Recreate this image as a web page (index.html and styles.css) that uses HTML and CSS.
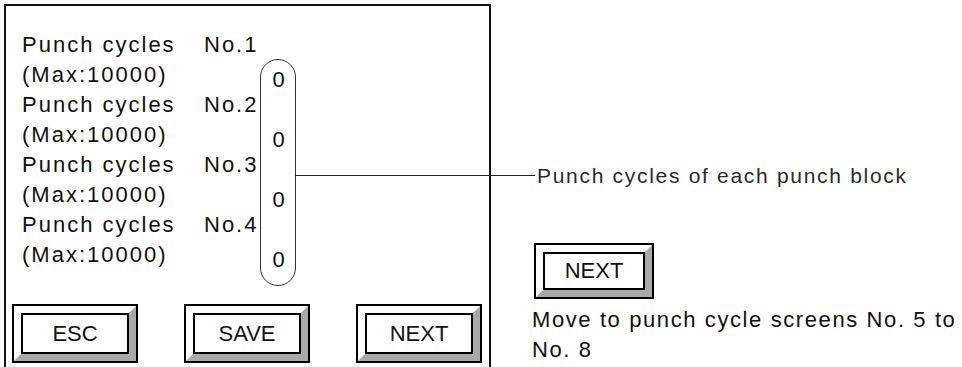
FILE: index.html
```html
<!DOCTYPE html>
<html lang="en">
<head>
   <meta charset="UTF-8">
   <meta name="viewport" content="width=device-width, initial-scale=1.0">
   <title>Punch Cycles</title>
   <link rel="stylesheet" href="styles.css">
</head>
<body>
    <div class="page">
        <!-- Screen panel -->
        <div class="panel">
            <div class="rows">
                <div class="labels">
                    <div><span class="name">Punch cycles</span>No.1</div>
                    <div>(Max:10000)</div>
                    <div><span class="name">Punch cycles</span>No.2</div>
                    <div>(Max:10000)</div>
                    <div><span class="name">Punch cycles</span>No.3</div>
                    <div>(Max:10000)</div>
                    <div><span class="name">Punch cycles</span>No.4</div>
                    <div>(Max:10000)</div>
                </div>
                <div class="oval">
                    <div>0</div>
                    <div>0</div>
                    <div>0</div>
                    <div>0</div>
                </div>
            </div>

            <div class="buttons">
                <div class="btn"><div class="bevel"><div class="face">ESC</div></div></div>
                <div class="btn"><div class="bevel"><div class="face">SAVE</div></div></div>
                <div class="btn"><div class="bevel"><div class="face">NEXT</div></div></div>
            </div>
        </div>

        <!-- Notes -->
        <div class="notes">
            <p class="callout">Punch cycles of each punch block</p>
            <div class="btn btn-small"><div class="bevel"><div class="face">NEXT</div></div></div>
            <p class="desc">Move to punch cycle screens No. 5 to<br>No. 8</p>
        </div>
    </div>
</body>
</html>
```

FILE: styles.css
```css
html, body {
    margin: 0;
    height: 100%;
    overflow: hidden;
    background-color: #fff;
}
body {
    font-family: "Liberation Sans", Arial, sans-serif;
    font-size: 22px;
    color: #111;
}
.page {
    display: flex;
    align-items: flex-start;
}
.panel {
    box-sizing: border-box;
    width: 487px;
    height: 363px;
    margin: 4px 0 0 4px;
    border: 2px solid #111;
    border-bottom: none;
    padding-top: 24px;
}
.rows {
    display: flex;
    align-items: flex-start;
}
.labels {
    width: 238px;
    padding-left: 16px;
    line-height: 30px;
    letter-spacing: 2px;
    white-space: nowrap;
}
.name {
    display: inline-block;
    width: 182px;
}
.oval {
    position: relative;
    box-sizing: border-box;
    width: 36px;
    height: 227px;
    margin-top: 29px;
    padding: 5px 0 0 1px;
    border: 1px solid #333;
    border-radius: 18px;
    display: flex;
    flex-direction: column;
    gap: 30px;
    line-height: 30px;
    text-align: center;
}
/* leader line to the callout */
.oval::after {
    content: "";
    position: absolute;
    left: 100%;
    top: 115px;
    width: 240px;
    height: 1px;
    background-color: #222;
}
.buttons {
    display: flex;
    justify-content: space-between;
    margin-top: 18px;
    padding: 0 7px 0 6px;
}
.btn {
    box-sizing: border-box;
    width: 126px;
    height: 59px;
    border: 2px solid #000;
    display: flex;
}
.bevel {
    flex: 1;
    display: flex;
    border-style: solid;
    border-width: 7px;
    border-color: #fff #a9a9a9 #a9a9a9 #fff;
}
.face {
    flex: 1;
    display: flex;
    align-items: center;
    justify-content: center;
    border: 2px solid #000;
    background-color: #fff;
}
.btn-small {
    width: 120px;
    height: 56px;
    margin: 52px 0 0 2px;
}
.notes {
    margin-left: 41px;
    padding-top: 161px;
}
.callout {
    margin: 0;
    padding-left: 5px;
    font-size: 21px;
    line-height: 30px;
    letter-spacing: 1.7px;
    color: #2a2a2a;
    white-space: nowrap;
}
.desc {
    margin: 6px 0 0;
    line-height: 30px;
    letter-spacing: 1.6px;
    white-space: nowrap;
}
```
